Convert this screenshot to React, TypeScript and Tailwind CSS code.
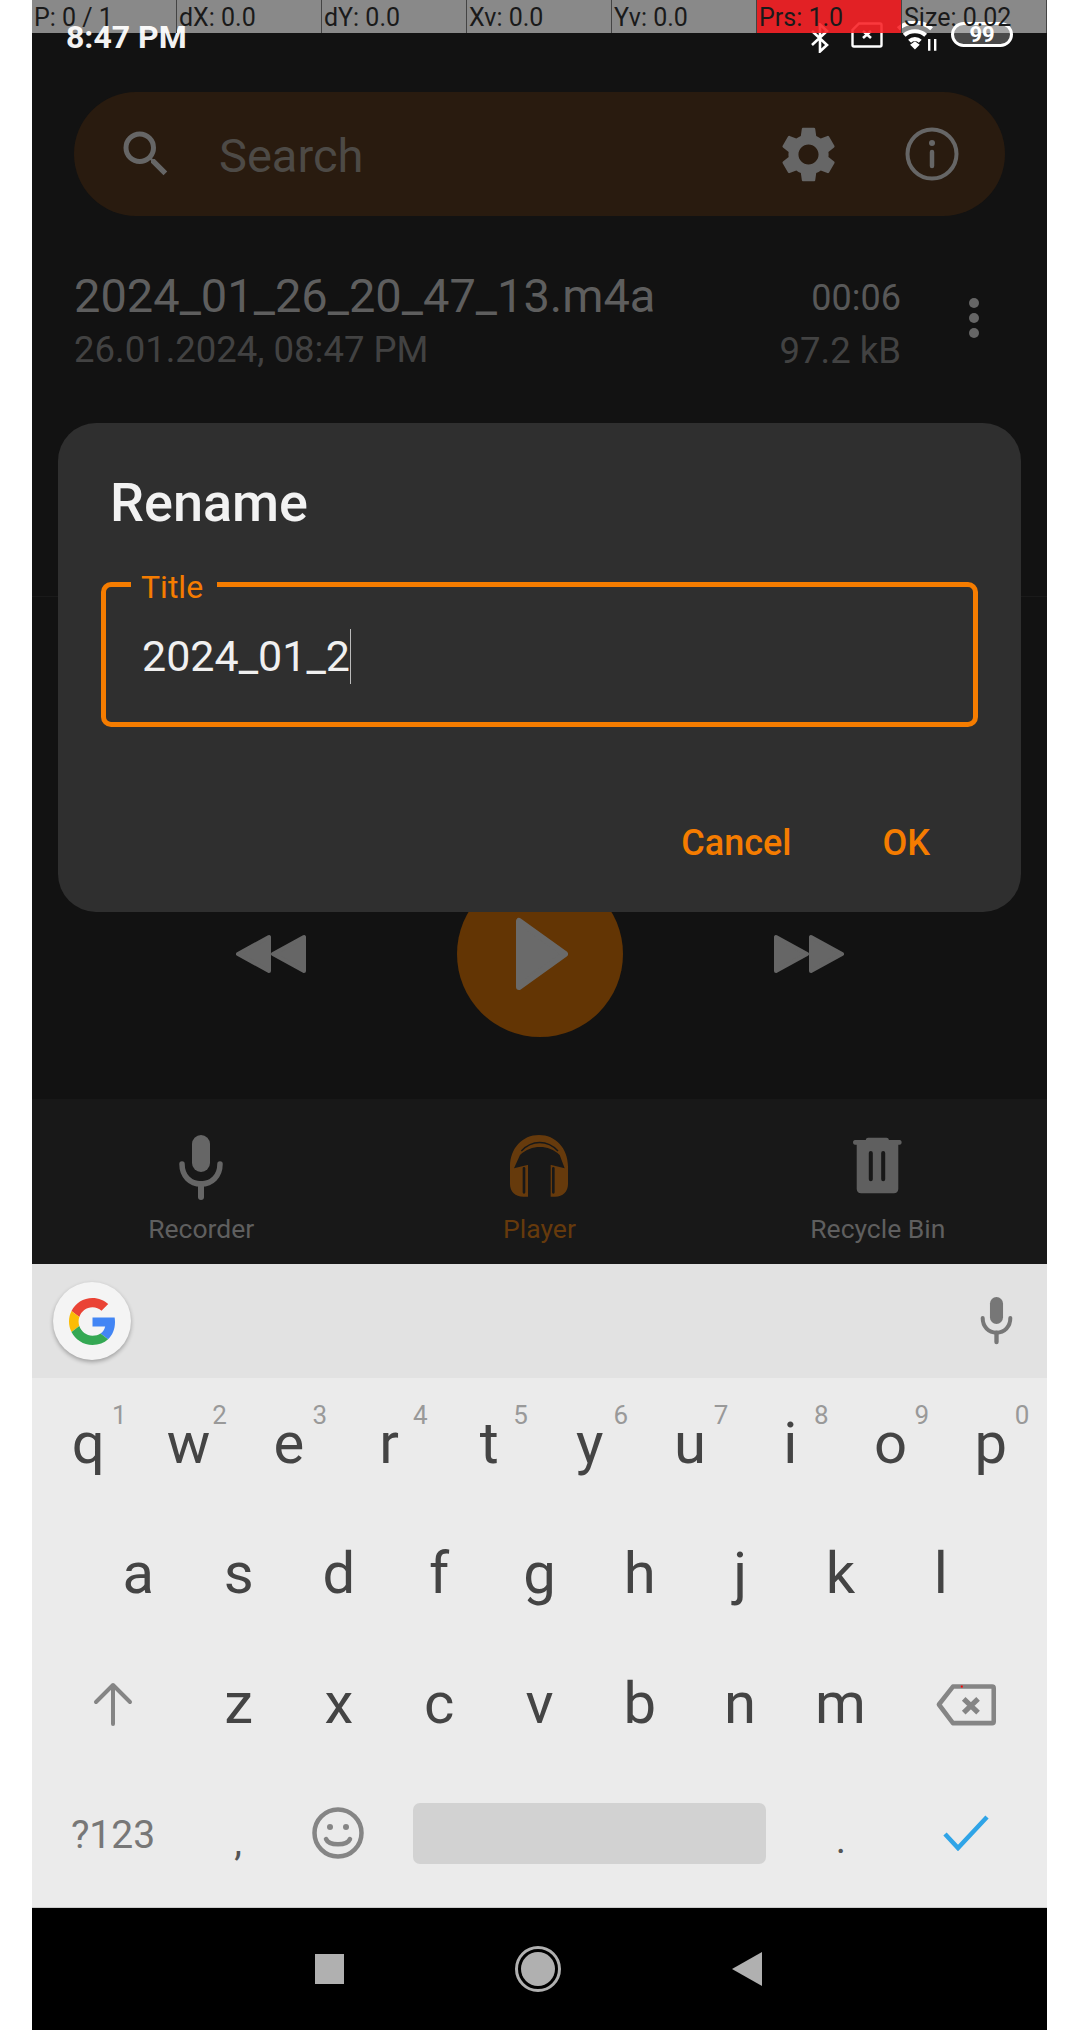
const POINTER_CELLS = ["P: 0 / 1", "dX: 0.0", "dY: 0.0", "Xv: 0.0", "Yv: 0.0", "Prs: 1.0", "Size: 0.02"];
const ROW_ONE = [
    ["q", "1"], ["w", "2"], ["e", "3"], ["r", "4"], ["t", "5"],
    ["y", "6"], ["u", "7"], ["i", "8"], ["o", "9"], ["p", "0"],
];
const ROW_TWO = ["a", "s", "d", "f", "g", "h", "j", "k", "l"];
const ROW_THREE = ["z", "x", "c", "v", "b", "n", "m"];

const Mic = ({ className }: { className: string }) => (
    <svg viewBox="0 0 48 66" className={className} fill="none">
        <rect x="15" y="0" width="18" height="37" rx="9" fill="currentColor" />
        <path d="M5 29c0 12 8 20 19 20s19-8 19-20" stroke="currentColor" strokeWidth="5.5" strokeLinecap="round" />
        <path d="M24 49v13" stroke="currentColor" strokeWidth="6" strokeLinecap="round" />
    </svg>
);

const Headphones = () => (
    <svg viewBox="58 30 174 186" className="h-[62px] w-[58px] text-[#663a0c]">
        <path
            fill="currentColor"
            d="M145 30C95 30 58 70 58 125v52c0 24 16 38 40 38h14V120h68v95h14c22 0 38-14 38-38v-52c0-55-37-95-87-95z"
        />
        <path fill="#181818" d="M88 90c35-32 85-32 119 0l15 40-40-10H110l-40 10z" />
        <path d="M92 78c32-34 78-34 110 0" fill="none" stroke="#181818" strokeWidth="4" />
        <path d="M100 130v72M188 130v72" stroke="#181818" strokeWidth="8" strokeLinecap="round" />
    </svg>
);

const Trash = () => (
    <svg viewBox="40 38 146 170" className="h-[57px] w-[49px] text-[#5f5f5f]" fill="currentColor">
        <path d="M85 40h55c4 0 6 2 7 7h32c4 0 6 3 6 7s-2 7-6 7h-4v132c0 8-6 13-13 13H64c-7 0-13-5-13-13V61h-5c-4 0-6-3-6-7s2-7 6-7h32c1-5 3-7 7-7z" />
        <path d="M93 86v78M130 86v78" stroke="#181818" strokeWidth="12" strokeLinecap="round" />
    </svg>
);

const GoogleLogo = () => (
    <svg viewBox="0 0 48 48" className="h-[47px] w-[47px]">
        <path fill="#EA4335" d="M24 9.5c3.54 0 6.71 1.22 9.21 3.6l6.85-6.85C35.9 2.38 30.47 0 24 0 14.62 0 6.51 5.38 2.56 13.22l7.98 6.19C12.43 13.72 17.74 9.5 24 9.5z" />
        <path fill="#4285F4" d="M46.98 24.55c0-1.57-.15-3.09-.38-4.55H24v9.02h12.94c-.58 2.96-2.26 5.48-4.78 7.18l7.73 6c4.51-4.18 7.09-10.36 7.09-17.65z" />
        <path fill="#FBBC05" d="M10.53 28.59c-.48-1.45-.76-2.99-.76-4.59s.27-3.14.76-4.59l-7.98-6.19C.92 16.46 0 20.12 0 24c0 3.88.92 7.54 2.56 10.78l7.97-6.19z" />
        <path fill="#34A853" d="M24 48c6.48 0 11.93-2.13 15.89-5.81l-7.73-6c-2.15 1.45-4.92 2.3-8.16 2.3-6.26 0-11.57-4.22-13.47-9.91l-7.98 6.19C6.51 42.62 14.62 48 24 48z" />
    </svg>
);

const StatusIcons = () => (
    <div className="flex items-start text-white">
        <svg viewBox="0 0 18 30" className="mt-[23px] h-[30px] w-[18px]" fill="none" stroke="currentColor" strokeWidth="2.6">
            <path d="M1 8l15 14-7 6.5V1.5L16 8 1 22" />
        </svg>
        <svg viewBox="0 0 32 26" className="ml-[22px] mt-[22px] h-[26px] w-[32px]" fill="none" stroke="currentColor" strokeWidth="2.4">
            <path d="M8 1.5h21c1 0 1.5.5 1.5 1.5v20c0 1-.5 1.5-1.5 1.5H3c-1 0-1.5-.5-1.5-1.5V8z" />
            <path d="M12 9l8 7M20 9l-8 7" strokeWidth="2.6" />
        </svg>
        <svg viewBox="0 0 36 26" className="ml-[14px] mt-[21px] h-[31px] w-[43px]" fill="none" stroke="currentColor">
            <path d="M1 6.5c8-7 20-7 28 0M6 12c5-4.5 13-4.5 18 0M10.5 17c2.5-2.5 6.5-2.5 9 0" strokeWidth="3.5" />
            <path d="M11 20l4-3 4 3-4 4z" fill="currentColor" stroke="none" />
            <path d="M27 15v10M32 15v10" strokeWidth="2" />
        </svg>
        <div className="ml-[11px] mt-[22px] flex h-[25px] w-[62px] items-center justify-center rounded-full border-[3px] border-white bg-[#4a4a4a] text-[22px] font-bold leading-none">
            99
        </div>
    </div>
);

const Key = ({ label, hint }: { label: string; hint?: string }) => (
    <div className="relative flex h-[130px] w-[100.3px] justify-center text-[58px] leading-[126px] text-[#444444]">
        {label}
        {hint && (
            <span className="absolute left-[74px] top-[20px] text-[26px] leading-[30px] text-[#999999]">{hint}</span>
        )}
    </div>
);

export default function App() {
    return (
        <div className="h-[2030px] w-[1088px] bg-white pl-[32px] font-['Roboto',sans-serif]">
            <div className="relative flex h-full w-[1015px] flex-col bg-[#121212]">
                <div className="flex h-[92px] shrink-0 items-start justify-between pl-[34px] pr-[34px]">
                    <span className="mt-[18px] text-[32px] font-bold leading-[38px] text-[#f2f2f2]">8:47 PM</span>
                    <StatusIcons />
                </div>

                {/* pointer location overlay */}
                <div className="absolute left-0 top-0 grid h-[33px] w-full grid-cols-7">
                    {POINTER_CELLS.map((cell) => (
                        <div
                            key={cell}
                            className={`overflow-hidden border-r border-[#444444] pl-[2px] text-[25px] leading-[35px] text-[#1a1a1a] ${cell.startsWith("Prs") ? "bg-[#f92428]/90" : "bg-white/50"}`}
                        >
                            {cell}
                        </div>
                    ))}
                </div>

                <div className="mx-[42px] flex h-[124px] shrink-0 items-center rounded-full bg-[#291b0f] text-[#666666]">
                    <svg viewBox="0 0 24 24" className="ml-[42px] h-[60px] w-[60px]" fill="currentColor">
                        <path d="M15.5 14h-.79l-.28-.27A6.471 6.471 0 0 0 16 9.5 6.5 6.5 0 1 0 9.5 16c1.61 0 3.09-.59 4.23-1.57l.27.28v.79l5 4.99L20.49 19l-4.99-5zm-6 0C7.01 14 5 11.99 5 9.5S7.01 5 9.5 5 14 7.01 14 9.5 11.99 14 9.5 14z" />
                    </svg>
                    <span className="ml-[43px] flex-1 pt-[3px] text-[47px] leading-[54px] text-[#4d4a46]">Search</span>
                    <svg viewBox="0 0 24 24" className="h-[67px] w-[67px]" fill="currentColor">
                        <path d="M19.14 12.94c.04-.3.06-.61.06-.94 0-.32-.02-.64-.07-.94l2.03-1.58a.49.49 0 0 0 .12-.61l-1.92-3.32a.488.488 0 0 0-.59-.22l-2.39.96c-.5-.38-1.03-.7-1.62-.94l-.36-2.54a.484.484 0 0 0-.48-.41h-3.84c-.24 0-.43.17-.47.41l-.36 2.54c-.59.24-1.13.57-1.62.94l-2.39-.96c-.22-.08-.47 0-.59.22L2.74 8.87c-.12.21-.08.47.12.61l2.03 1.58c-.05.3-.07.62-.07.94s.02.64.07.94l-2.03 1.58a.49.49 0 0 0-.12.61l1.92 3.32c.12.22.37.29.59.22l2.39-.96c.5.38 1.03.7 1.62.94l.36 2.54c.05.24.24.41.48.41h3.84c.24 0 .44-.17.47-.41l.36-2.54c.59-.24 1.13-.56 1.62-.94l2.39.96c.22.08.47 0 .59-.22l1.92-3.32c.12-.22.07-.47-.12-.61l-2.01-1.58zM12 15.6c-1.98 0-3.6-1.62-3.6-3.6s1.62-3.6 3.6-3.6 3.6 1.62 3.6 3.6-1.62 3.6-3.6 3.6z" />
                    </svg>
                    <svg viewBox="0 0 54 54" className="ml-[63px] mr-[46px] h-[54px] w-[54px]" fill="none" stroke="currentColor">
                        <circle cx="27" cy="27" r="24.5" strokeWidth="4" />
                        <path d="M27 25v14" strokeWidth="4.5" strokeLinecap="round" />
                        <circle cx="27" cy="16" r="3" fill="currentColor" stroke="none" />
                    </svg>
                </div>

                <div className="ml-[42px] mr-[68px] mt-[52px] flex h-[328px] shrink-0 items-start justify-between">
                    <div>
                        <div className="text-[47px] leading-[56px] text-[#5e5e5e]">2024_01_26_20_47_13.m4a</div>
                        <div className="mt-[6px] text-[36.5px] leading-[40px] text-[#424242]">26.01.2024, 08:47 PM</div>
                    </div>
                    <div className="flex items-start">
                        <div className="mt-[8px] text-right">
                            <div className="text-[36px] leading-[44px] text-[#585858]">00:06</div>
                            <div className="mt-[9px] text-[36.5px] leading-[44px] text-[#424242]">97.2 kB</div>
                        </div>
                        <div className="ml-[68px] mt-[30px] flex flex-col gap-[5px]">
                            <span className="h-[10px] w-[10px] rounded-full bg-[#666666]" />
                            <span className="h-[10px] w-[10px] rounded-full bg-[#666666]" />
                            <span className="h-[10px] w-[10px] rounded-full bg-[#666666]" />
                        </div>
                    </div>
                </div>

                <div className="h-px shrink-0 bg-[#1a1a1a]" />

                <div className="mt-[274px] flex shrink-0 items-center justify-center gap-[151px] text-[#666666]">
                    <svg viewBox="0 0 70 40" className="h-[40px] w-[70px]" fill="currentColor" stroke="currentColor" strokeWidth="4" strokeLinejoin="round">
                        <path d="M33 3v34L2 20zM68 3v34L37 20z" />
                    </svg>
                    <div className="flex h-[166px] w-[166px] items-center justify-center rounded-full bg-[#633504]">
                        <svg viewBox="0 0 52 74" className="ml-[5px] h-[74px] w-[52px] text-[#6a6a6a]" fill="currentColor" stroke="currentColor" strokeWidth="6" strokeLinejoin="round">
                            <path d="M3 4v66l46-33z" />
                        </svg>
                    </div>
                    <svg viewBox="0 0 70 40" className="h-[40px] w-[70px]" fill="currentColor" stroke="currentColor" strokeWidth="4" strokeLinejoin="round">
                        <path d="M2 3v34l31-17zM37 3v34l31-17z" />
                    </svg>
                </div>

                <div className="mt-[62px] grid h-[165px] shrink-0 grid-cols-3 bg-[#181818] text-[26.5px] leading-[32px] text-[#5f5f5f]">
                    <div className="flex flex-col items-center pt-[36px]">
                        <div className="flex h-[66px] items-start text-[#666666]">
                            <Mic className="h-[66px] w-[48px]" />
                        </div>
                        <span className="mt-[12px]">Recorder</span>
                    </div>
                    <div className="flex flex-col items-center pt-[36px]">
                        <div className="flex h-[66px] items-start">
                            <Headphones />
                        </div>
                        <span className="mt-[12px] text-[#663a0c]">Player</span>
                    </div>
                    <div className="flex flex-col items-center pt-[36px]">
                        <div className="flex h-[66px] items-start pt-[2px]">
                            <Trash />
                        </div>
                        <span className="mt-[12px]">Recycle Bin</span>
                    </div>
                </div>

                <div className="flex h-[114px] shrink-0 items-center justify-between bg-[#e2e2e2] pl-[21px] pr-[33px]">
                    <div className="flex h-[78px] w-[78px] items-center justify-center rounded-full bg-[#f4f4f4] shadow-[0_2px_4px_rgba(0,0,0,0.3)]">
                        <GoogleLogo />
                    </div>
                    <Mic className="h-[48px] w-[35px] text-[#777777]" />
                </div>

                <div className="flex h-[530px] shrink-0 flex-col items-center border-b border-[#cccccc] bg-[#ebebeb] pt-[2px]">
                    <div className="flex">
                        {ROW_ONE.map(([label, hint]) => (
                            <Key key={label} label={label} hint={hint} />
                        ))}
                    </div>
                    <div className="flex">
                        {ROW_TWO.map((label) => (
                            <Key key={label} label={label} />
                        ))}
                    </div>
                    <div className="flex">
                        <div className="flex h-[130px] w-[150px] items-center justify-center pb-[2px]">
                            <svg viewBox="0 0 40 44" className="h-[44px] w-[40px] text-[#858585]" fill="none" stroke="currentColor" strokeWidth="4" strokeLinecap="round" strokeLinejoin="round">
                                <path d="M20 42V3M3 20L20 3l17 17" />
                            </svg>
                        </div>
                        {ROW_THREE.map((label) => (
                            <Key key={label} label={label} />
                        ))}
                        <div className="flex h-[130px] w-[150px] items-center justify-center pb-[2px]">
                            <svg viewBox="40 40 190 130" className="h-[43px] w-[62px]" fill="none" stroke="#858585" strokeWidth="14" strokeLinejoin="round">
                                <path d="M95 50H215a5 5 0 0 1 5 5V157a5 5 0 0 1-5 5H95L52 105z" />
                                <path d="M128 88l44 42M172 88l-44 42" strokeWidth="16" />
                                <rect x="119" y="47" width="6" height="6" fill="#ff0000" stroke="none" />
                            </svg>
                        </div>
                    </div>
                    <div className="flex items-center">
                        <div className="flex h-[130px] w-[150px] items-center justify-center text-[39px] text-[#777777]">?123</div>
                        <div className="flex h-[130px] w-[100.3px] justify-center pt-[44px] text-[39px] leading-[56px] text-[#555555]">,</div>
                        <div className="flex h-[130px] w-[100.3px] items-center justify-center pb-[4px]">
                            <svg viewBox="0 0 52 52" className="h-[52px] w-[52px]" fill="none" stroke="#858585" strokeWidth="4.5">
                                <circle cx="26" cy="26" r="23.5" />
                                <circle cx="18" cy="20" r="3" fill="#858585" stroke="none" />
                                <circle cx="34" cy="20" r="3" fill="#858585" stroke="none" />
                                <path d="M14 32c3 7 21 7 24 0" strokeLinecap="round" />
                            </svg>
                        </div>
                        <div className="flex h-[130px] w-[402px] items-start justify-center pt-[33px]">
                            <div className="h-[61px] w-[353px] rounded-[7px] bg-[#d2d2d2]" />
                        </div>
                        <div className="flex h-[130px] w-[100.3px] justify-center pt-[42px] text-[39px] leading-[56px] text-[#555555]">.</div>
                        <div className="flex h-[130px] w-[150px] items-center justify-center pb-[4px]">
                            <svg viewBox="0 0 46 36" className="h-[36px] w-[46px]" fill="none" stroke="#2fa4e7" strokeWidth="4.5">
                                <path d="M2 19l13 14L44 2" />
                            </svg>
                        </div>
                    </div>
                </div>

                <div className="flex flex-1 items-center justify-center gap-[171px] bg-black">
                    <span className="-ml-[2px] h-[30px] w-[29px] bg-[#b0b0b0]" />
                    <span className="flex h-[46px] w-[46px] items-center justify-center rounded-full border-[3px] border-[#b0b0b0]">
                        <span className="h-[34px] w-[34px] rounded-full bg-[#b0b0b0]" />
                    </span>
                    <svg viewBox="0 0 30 34" className="h-[34px] w-[30px]" fill="#b0b0b0">
                        <path d="M30 0v34L0 17z" />
                    </svg>
                </div>

                {/* rename dialog */}
                <div className="absolute left-[26px] top-[423px] h-[489px] w-[963px] rounded-[38px] bg-[#2f2f2f]">
                    <div className="pl-[52px] pt-[48px] text-[54px] font-medium leading-[64px] text-[#f2f2f2]">Rename</div>
                    <div className="relative mx-[43px] mt-[47px] h-[145px] rounded-[10px] border-[5px] border-[#f57c00] pl-[36px] pt-[42px]">
                        <span className="absolute left-[25px] top-[-15px] bg-[#2f2f2f] pl-[10px] pr-[14px] text-[32px] leading-[30px] text-[#f57c00]">Title</span>
                        <div className="flex h-[55px] items-center text-[43px] leading-[55px] text-[#f0f0f0]">
                            2024_01_2
                            <span className="h-[55px] w-px bg-[#bbbbbb]" />
                        </div>
                    </div>
                    <div className="mt-[95px] flex justify-end gap-[91px] pr-[91px] text-[36px] font-medium leading-[42px] text-[#f57c00]">
                        <span>Cancel</span>
                        <span>OK</span>
                    </div>
                </div>
            </div>
        </div>
    );
}
